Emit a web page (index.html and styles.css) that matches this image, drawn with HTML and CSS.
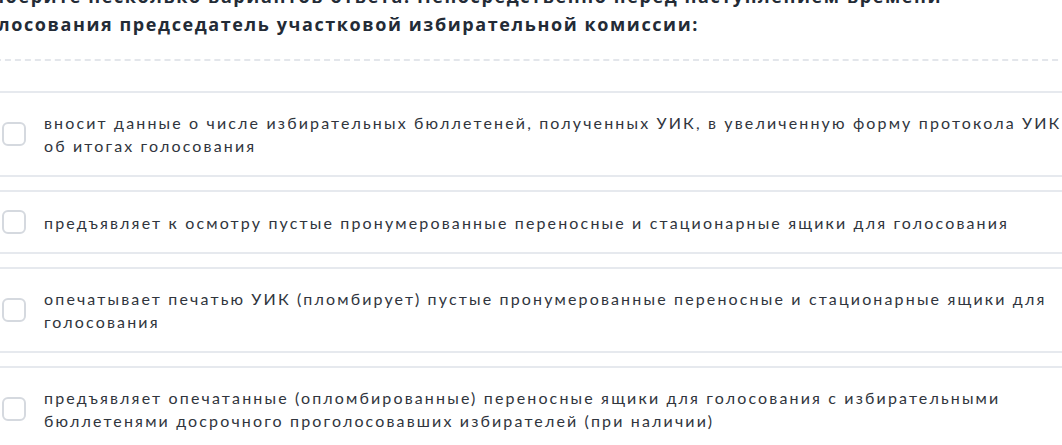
FILE: index.html
```html
<!DOCTYPE html>
<html lang="ru">
<head>
    <meta charset="UTF-8">
    <meta name="viewport" content="width=device-width, initial-scale=1.0">
    <title>Вопрос</title>
    <link rel="stylesheet" href="styles.css">
</head>
<body>
    <div class="quiz">
        <h2 class="question">Выберите несколько вариантов ответа. Непосредственно перед наступлением времени голосования председатель участковой избирательной комиссии:</h2>

        <div class="answers">
            <label class="answer">
                <span class="box"></span>
                <span class="answer-text">вносит данные о числе избирательных бюллетеней, полученных УИК, в увеличенную форму протокола УИК об итогах голосования</span>
            </label>
            <label class="answer">
                <span class="box"></span>
                <span class="answer-text">предъявляет к осмотру пустые пронумерованные переносные и стационарные ящики для голосования</span>
            </label>
            <label class="answer">
                <span class="box"></span>
                <span class="answer-text">опечатывает печатью УИК (пломбирует) пустые пронумерованные переносные и стационарные ящики для голосования</span>
            </label>
            <label class="answer">
                <span class="box"></span>
                <span class="answer-text">предъявляет опечатанные (опломбированные) переносные ящики для голосования с избирательными бюллетенями досрочного проголосовавших избирателей (при наличии)</span>
            </label>
        </div>
    </div>
</body>
</html>
```

FILE: styles.css
```css
body {
    margin: 0;
    padding: 0;
    background: #fff;
    overflow: hidden;
    font-family: Lato, "Noto Sans", sans-serif;
}

.quiz {
    margin-left: -22px; /* блок шире окна */
    width: 1110px;
}

.question {
    margin: -18px 0 0 -3px;
    padding: 0 60px 21px 0;
    border-bottom: 2px dashed #e3e6eb;
    font-family: "Open Sans", sans-serif;
    font-size: 18px;
    font-weight: 700;
    line-height: 28px;
    letter-spacing: 1.6px;
    color: #232b36;
}

.answers {
    display: flex;
    flex-direction: column;
    gap: 13px;
    margin-top: 30px;
}

.answer {
    display: flex;
    align-items: center;
    gap: 18px;
    padding: 18px 0 18px 24px;
    border-top: 2px solid #e6e9ee;
    border-bottom: 2px solid #e6e9ee;
    cursor: pointer;
}

.box {
    flex: none;
    width: 20px;
    height: 20px;
    border: 2px solid #d5d9df;
    border-radius: 6px;
    background: #fff;
}

.answer-text {
    font-size: 16px;
    line-height: 23px;
    letter-spacing: 2.15px;
    color: #30353d;
    padding-right: 20px;
}
```
